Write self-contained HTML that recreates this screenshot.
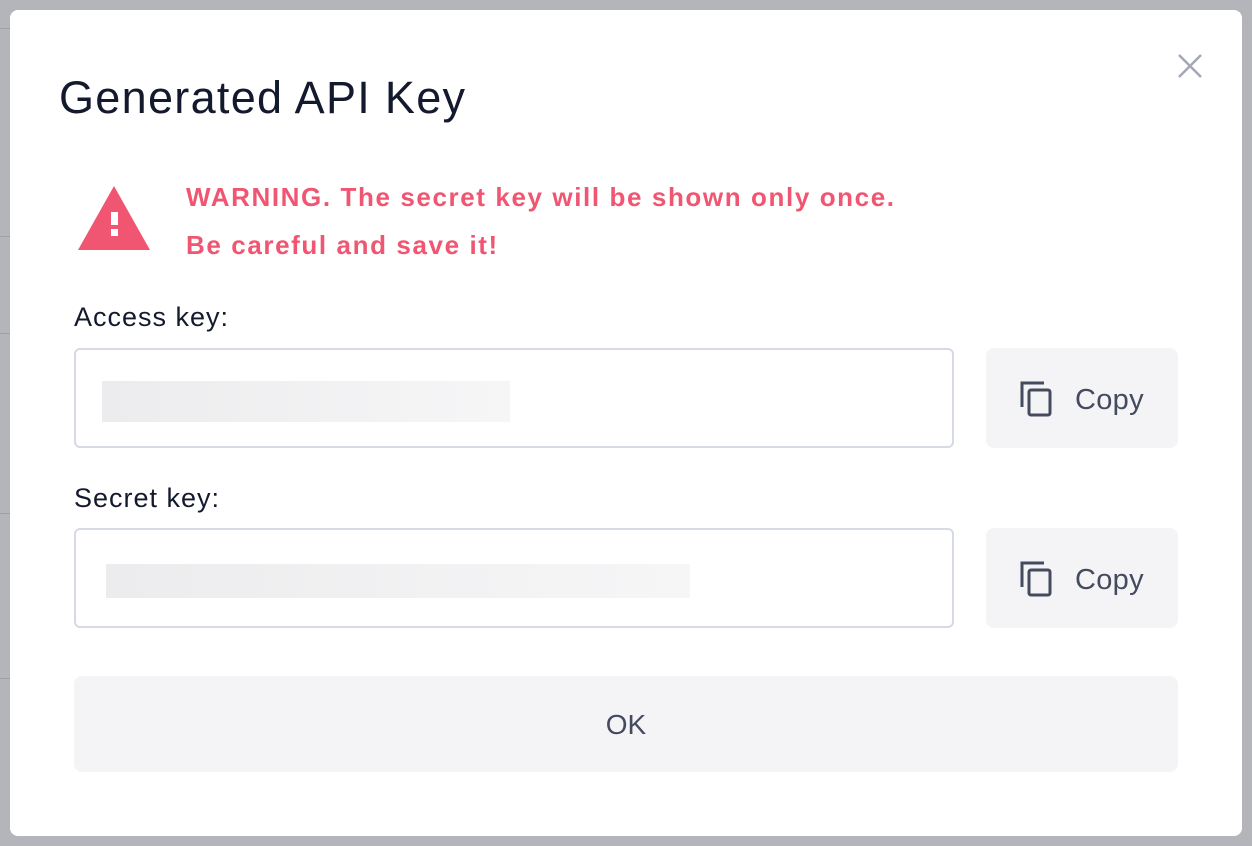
<!DOCTYPE html>
<html><head><style>
body{margin:0;width:1252px;height:846px;background:#b3b5ba;position:relative;overflow:hidden;font-family:"Liberation Sans",sans-serif}
.bgl{position:absolute;left:0;width:12px;height:1px;background:#9ea1a8}
.modal{position:absolute;left:10px;top:10px;width:1232px;height:826px;background:#fff;border-radius:8px}
h1{position:absolute;left:59px;top:72px;margin:0;font-size:45px;font-weight:normal;color:#141a2e;letter-spacing:1.3px}
.warn{position:absolute;left:186px;color:#f05672;font-weight:bold;font-size:26px;letter-spacing:1.6px}
.lbl{position:absolute;left:74px;font-size:27px;color:#141a2e;letter-spacing:1px}
.inp{position:absolute;left:74px;width:876px;height:96px;border:2px solid #d6d9e6;border-radius:6px}
.bar{position:absolute;height:41px;background:linear-gradient(90deg,#ececee,#f6f6f7)}
.btn{position:absolute;left:986px;width:192px;height:100px;background:#f4f4f6;border-radius:8px;color:#454b5e;font-size:29px}
.btn span{position:absolute;left:89px;top:36px;letter-spacing:0.3px}
.btn svg{position:absolute;left:34px;top:32px}
.ok{position:absolute;left:74px;top:676px;width:1104px;height:96px;background:#f4f4f6;border-radius:8px;text-align:center;line-height:98px;font-size:28px;color:#454b5e}
</style></head><body>
<div class="bgl" style="top:28px"></div><div class="bgl" style="top:236px"></div><div class="bgl" style="top:333px"></div><div class="bgl" style="top:513px"></div><div class="bgl" style="top:678px"></div>
<div class="modal"></div>
<svg style="position:absolute;left:1176px;top:52px" width="28" height="28" viewBox="0 0 28 28"><path d="M3 3L25 25M25 3L3 25" stroke="#a3a8b8" stroke-width="2.5"/></svg>
<h1>Generated API Key</h1>
<svg style="position:absolute;left:77px;top:185px" width="74" height="66" viewBox="0 0 74 66"><path d="M37 1L73 65H1Z" fill="#f05672"/><rect x="34" y="27" width="7" height="13" fill="#fff"/><rect x="34" y="44" width="7" height="7" fill="#fff"/></svg>
<div class="warn" style="top:182px">WARNING. The secret key will be shown only once.</div>
<div class="warn" style="top:230px">Be careful and save it!</div>
<div class="lbl" style="top:302px">Access key:</div>
<div class="inp" style="top:348px"></div>
<div class="bar" style="left:102px;top:381px;width:408px"></div>
<div class="btn" style="top:348px"><svg width="34" height="38" viewBox="0 0 34 38"><path d="M2 27V3H24" fill="none" stroke="#454b5e" stroke-width="3"/><rect x="9" y="10" width="21" height="25" rx="2" fill="none" stroke="#454b5e" stroke-width="3"/></svg><span>Copy</span></div>
<div class="lbl" style="top:483px">Secret key:</div>
<div class="inp" style="top:528px"></div>
<div class="bar" style="left:106px;top:564px;width:584px;height:34px"></div>
<div class="btn" style="top:528px"><svg width="34" height="38" viewBox="0 0 34 38"><path d="M2 27V3H24" fill="none" stroke="#454b5e" stroke-width="3"/><rect x="9" y="10" width="21" height="25" rx="2" fill="none" stroke="#454b5e" stroke-width="3"/></svg><span>Copy</span></div>
<div class="ok">OK</div>
</body></html>
